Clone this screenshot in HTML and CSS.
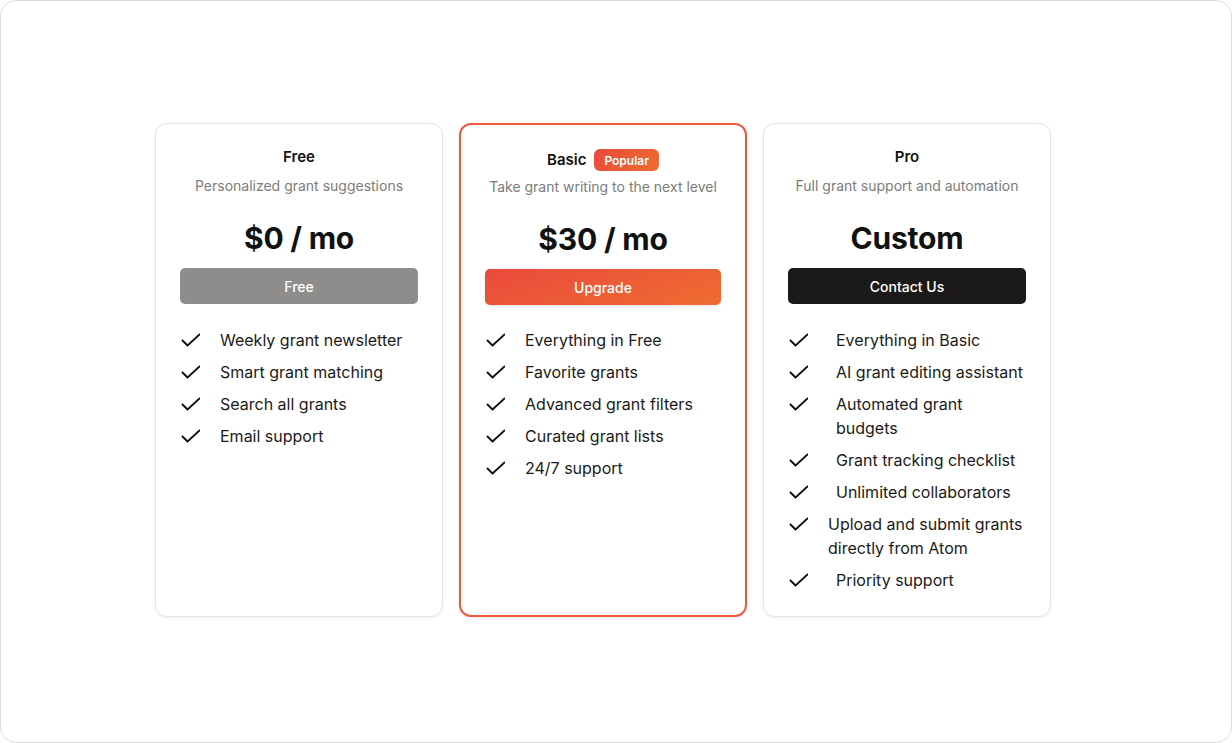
FILE: index.html
```html
<!DOCTYPE html>
<html lang="en">
<head>
<meta charset="utf-8">
<title>Pricing</title>
<link rel="stylesheet" href="styles.css">
</head>
<body>
<div class="frame">
  <div class="plans">
    <section class="card">
      <div class="head"><h2 class="title">Free</h2></div>
      <p class="subtitle">Personalized grant suggestions</p>
      <div class="price">$0 / mo</div>
      <button class="btn btn-free">Free</button>
      <ul class="features">
        <li><svg class="check" viewBox="0 0 20 20"><path d="M2.5 10.5L7.5 15.5L19.5 4.5"/></svg><span>Weekly grant newsletter</span></li>
        <li><svg class="check" viewBox="0 0 20 20"><path d="M2.5 10.5L7.5 15.5L19.5 4.5"/></svg><span>Smart grant matching</span></li>
        <li><svg class="check" viewBox="0 0 20 20"><path d="M2.5 10.5L7.5 15.5L19.5 4.5"/></svg><span>Search all grants</span></li>
        <li><svg class="check" viewBox="0 0 20 20"><path d="M2.5 10.5L7.5 15.5L19.5 4.5"/></svg><span>Email support</span></li>
      </ul>
    </section>

    <section class="card card-popular">
      <div class="head head-badge"><h2 class="title">Basic</h2><span class="badge">Popular</span></div>
      <p class="subtitle subtitle-tight">Take grant writing to the next level</p>
      <div class="price">$30 / mo</div>
      <button class="btn btn-upgrade">Upgrade</button>
      <ul class="features features-tight">
        <li><svg class="check" viewBox="0 0 20 20"><path d="M2.5 10.5L7.5 15.5L19.5 4.5"/></svg><span>Everything in Free</span></li>
        <li><svg class="check" viewBox="0 0 20 20"><path d="M2.5 10.5L7.5 15.5L19.5 4.5"/></svg><span>Favorite grants</span></li>
        <li><svg class="check" viewBox="0 0 20 20"><path d="M2.5 10.5L7.5 15.5L19.5 4.5"/></svg><span>Advanced grant filters</span></li>
        <li><svg class="check" viewBox="0 0 20 20"><path d="M2.5 10.5L7.5 15.5L19.5 4.5"/></svg><span>Curated grant lists</span></li>
        <li><svg class="check" viewBox="0 0 20 20"><path d="M2.5 10.5L7.5 15.5L19.5 4.5"/></svg><span>24/7 support</span></li>
      </ul>
    </section>

    <section class="card">
      <div class="head"><h2 class="title">Pro</h2></div>
      <p class="subtitle">Full grant support and automation</p>
      <div class="price">Custom</div>
      <button class="btn btn-contact">Contact Us</button>
      <ul class="features">
        <li><svg class="check" viewBox="0 0 20 20"><path d="M2.5 10.5L7.5 15.5L19.5 4.5"/></svg><span class="indent">Everything in Basic</span></li>
        <li><svg class="check" viewBox="0 0 20 20"><path d="M2.5 10.5L7.5 15.5L19.5 4.5"/></svg><span class="indent">AI grant editing assistant</span></li>
        <li><svg class="check" viewBox="0 0 20 20"><path d="M2.5 10.5L7.5 15.5L19.5 4.5"/></svg><span class="indent">Automated grant<br>budgets</span></li>
        <li><svg class="check" viewBox="0 0 20 20"><path d="M2.5 10.5L7.5 15.5L19.5 4.5"/></svg><span class="indent">Grant tracking checklist</span></li>
        <li><svg class="check" viewBox="0 0 20 20"><path d="M2.5 10.5L7.5 15.5L19.5 4.5"/></svg><span class="indent">Unlimited collaborators</span></li>
        <li><svg class="check" viewBox="0 0 20 20"><path d="M2.5 10.5L7.5 15.5L19.5 4.5"/></svg><span>Upload and submit grants<br>directly from Atom</span></li>
        <li><svg class="check" viewBox="0 0 20 20"><path d="M2.5 10.5L7.5 15.5L19.5 4.5"/></svg><span class="indent">Priority support</span></li>
      </ul>
    </section>
  </div>
</div>
</body>
</html>
```

FILE: styles.css
```css
* { box-sizing: border-box; }

html, body {
  margin: 0;
  padding: 0;
  background: #ffffff;
}

body {
  font-family: Inter, "Noto Sans", "Liberation Sans", sans-serif;
  color: #161616;
}

.frame {
  width: 1232px;
  height: 743px;
  border: 1px solid #dadada;
  border-radius: 16px;
  background: #ffffff;
  padding: 122px 0 0 154px;
}

.plans {
  display: flex;
  gap: 16px;
  align-items: stretch;
}

.card {
  width: 288px;
  border: 1px solid #e4e4e4;
  border-radius: 12px;
  background: #fff;
  padding: 23px 24px 24px;
  display: flex;
  flex-direction: column;
  align-items: stretch;
  box-shadow: 0 1px 3px rgba(0, 0, 0, 0.07);
}

.card-popular {
  border: 2px solid #ec5a3c;
  padding-top: 22px;
}

.head {
  display: flex;
  align-items: center;
  justify-content: center;
  gap: 8px;
  height: 20px;
}

.head-badge {
  height: 22px;
  margin-top: 2px;
}

.title {
  margin: 0;
  font-size: 15px;
  font-weight: 600;
  line-height: 20px;
  color: #111;
}

.badge {
  display: inline-flex;
  align-items: center;
  height: 22px;
  padding: 0 10px;
  border-radius: 6px;
  background: linear-gradient(135deg, #e8493d 0%, #ef6e2f 100%);
  color: #fff;
  font-size: 12px;
  font-weight: 600;
}

.subtitle {
  margin: 9px 0 0;
  text-align: center;
  font-size: 14px;
  line-height: 20px;
  color: #7c7c7c;
}

.subtitle-tight {
  margin-top: 6px;
}

.price {
  margin-top: 24px;
  text-align: center;
  font-size: 30px;
  line-height: 36px;
  font-weight: 700;
  color: #111;
  letter-spacing: -0.2px;
}

.btn {
  margin-top: 12px;
  height: 36px;
  border: 0;
  border-radius: 5px;
  font-family: inherit;
  font-size: 14px;
  font-weight: 450;
  color: #fff;
  cursor: pointer;
}

.btn-free {
  background: #8e8d8b;
}

.btn-upgrade {
  background: linear-gradient(160deg, #e94a3d 0%, #ef6d30 100%);
  box-shadow: 0 1px 3px rgba(0, 0, 0, 0.12);
}

.btn-contact {
  background: #1c1a19;
}

.features {
  list-style: none;
  margin: 24px 0 0;
  padding: 0;
  display: flex;
  flex-direction: column;
  gap: 8px;
}

.features-tight {
  margin-top: 23px;
}

.features li {
  display: flex;
  align-items: flex-start;
  gap: 20px;
  font-size: 16px;
  line-height: 24px;
  color: #1a1a1a;
}

.check {
  flex: 0 0 20px;
  width: 20px;
  height: 20px;
  margin-top: 2px;
  fill: none;
  stroke: #111;
  stroke-width: 1.9;
  stroke-linecap: round;
  stroke-linejoin: round;
}

.indent {
  padding-left: 8px;
}
```
